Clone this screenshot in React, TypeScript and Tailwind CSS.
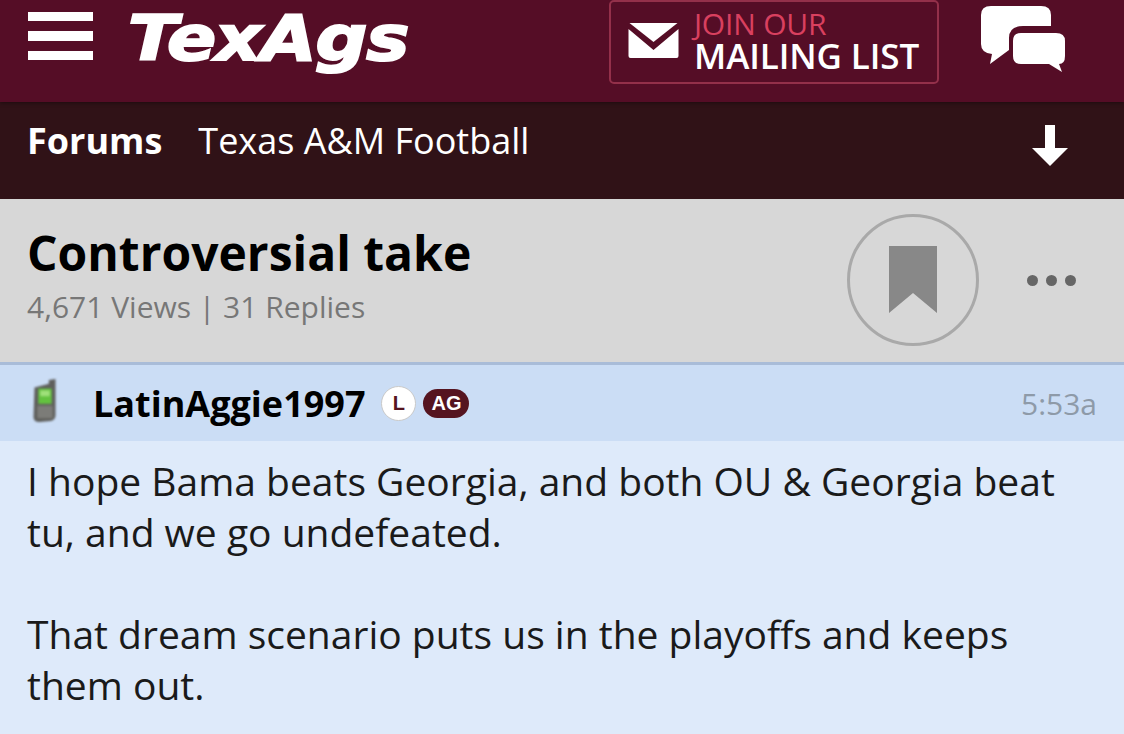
import React from 'react';

const sans = "font-['Open_Sans','Noto_Sans',sans-serif]";

function PhoneIcon() {
  return (
    <svg width="28" height="44" viewBox="0 0 28 46" className="blur-[1px] mt-[-4px]">
      <path d="M3 9 L18 5 L18 1 L25 0 L25 38 Q25 43 20 44 L8 45 Q2 45 2 40 Z" fill="#5f5f5c" />
      <rect x="7" y="10" width="14" height="16" fill="#63c23f" />
      <rect x="9" y="12" width="10" height="6" fill="#9fe07a" />
      <rect x="6" y="28" width="16" height="13" fill="#7c7c78" />
    </svg>
  );
}

export default function App() {
  return (
    <div className={`w-[1124px] h-[734px] overflow-hidden bg-[#deeafa] ${sans}`}>
      <header className="h-[102px] bg-[#550d26] flex items-start relative z-10 shadow-[0_1px_4px_rgba(0,0,0,0.4)]">
        <div className="ml-[28px] mt-[12px] w-[65px] flex flex-col gap-[10px]">
          <div className="h-[9px] bg-white" />
          <div className="h-[10px] bg-white" />
          <div className="h-[9px] bg-white" />
        </div>
        <div className="ml-[35px] mt-0 w-[280px] h-[80px] text-white text-[62px] leading-[78px] font-['DejaVu_Sans',sans-serif] font-bold italic tracking-[-1px] [-webkit-text-stroke:2px_white] whitespace-nowrap origin-left scale-x-[1.17]">
          TexAgs
        </div>
        <div className="ml-[201px] mt-0 w-[330px] h-[84px] rounded-[5px] border-2 border-[#93304a] flex items-center">
          <svg width="51" height="36" viewBox="0 0 50 36" className="ml-[17px] mt-[-2px]">
            <path d="M1 0 H49 L25 19 Z" fill="#fff" />
            <path d="M0 6 L25 27 L50 6 V33 Q50 35 48 35 H2 Q0 35 0 33 Z" fill="#fff" />
          </svg>
          <div className="ml-[15px] flex flex-col">
            <span className="text-[#d9405f] text-[30px] leading-[30px] mt-[-3px] font-medium tracking-[-0.2px]">JOIN OUR</span>
            <span className="text-white text-[35px] leading-[34px] font-semibold tracking-[-0.1px]">MAILING LIST</span>
          </div>
        </div>
        <svg width="86" height="68" viewBox="0 0 86 68" className="ml-[42px] mt-[6px]">
          <path d="M10 0 H60 Q70 0 70 9 V20 H42 Q28 20 28 32 V44 L9 58 L11 48 Q0 47 0 38 V9 Q0 0 10 0 Z" fill="#fff" />
          <path d="M40 27 H75 Q84 27 84 35 V50 Q84 58 78 58 L81 66 L68 58 H40 Q32 58 32 50 V35 Q32 27 40 27 Z" fill="#fff" />
        </svg>
      </header>

      <nav className="h-[97px] bg-[#301217] flex items-start text-white">
        <span className="ml-[27px] mt-[14px] text-[36px] leading-[49px] font-bold">Forums</span>
        <span className="ml-[36px] mt-[14px] text-[36px] leading-[49px]">Texas A&amp;M Football</span>
        <svg width="36" height="41" viewBox="0 0 36 41" className="ml-auto mr-[56px] mt-[23px]">
          <path d="M13 0 H23 V23 H36 L18 41 L0 23 H13 Z" fill="#fff" />
        </svg>
      </nav>

      <section className="h-[163px] bg-[#d7d7d7] flex items-start">
        <div className="ml-[27px] flex-1">
          <h1 className="mt-[21px] text-[48px] leading-[65px] font-bold text-black">Controversial take</h1>
          <p className="text-[30px] leading-[41px] text-[#777777] mt-[1px]">4,671 Views | 31 Replies</p>
        </div>
        <div className="mt-[15px] w-[132px] h-[132px] rounded-full border-[3px] border-[#a9a9a9] flex items-center justify-center">
          <svg width="48" height="68" viewBox="0 0 48 68">
            <path d="M0 0 H48 V67 L24 47 L0 67 Z" fill="#888888" />
          </svg>
        </div>
        <div className="ml-[48px] mr-[48px] mt-[76px] flex gap-[8px]">
          <div className="w-[11px] h-[11px] rounded-full bg-[#666666]" />
          <div className="w-[11px] h-[11px] rounded-full bg-[#666666]" />
          <div className="w-[11px] h-[11px] rounded-full bg-[#666666]" />
        </div>
      </section>

      <div className="h-[79px] bg-[#cbddf5] border-t-[3px] border-[#a9bcd8] flex items-center">
        <div className="ml-[31px] w-[36px]">
          <PhoneIcon />
        </div>
        <span className="ml-[26px] text-[36px] leading-[49px] font-bold text-black">LatinAggie1997</span>
        <div className="ml-[16px] w-[35px] h-[35px] rounded-full bg-white border border-[#c9c9c9] flex items-center justify-center text-[#551420] text-[20px] font-bold font-['Liberation_Sans',sans-serif]">
          L
        </div>
        <div className="ml-[7px] w-[46px] h-[29px] rounded-full bg-[#551420] flex items-center justify-center text-white text-[20px] font-bold font-['Liberation_Sans',sans-serif]">
          AG
        </div>
        <span className="ml-auto mr-[27px] text-[30px] text-[#8e9aa8]">5:53a</span>
      </div>

      <div className="px-[27px] pt-[14px] text-[39px] leading-[51px] text-[#1a1a1a]">
        <p>I hope Bama beats Georgia, and both OU &amp; Georgia beat<br />tu, and we go undefeated.</p>
        <p className="mt-[51px]">That dream scenario puts us in the playoffs and keeps<br />them out.</p>
      </div>
    </div>
  );
}
